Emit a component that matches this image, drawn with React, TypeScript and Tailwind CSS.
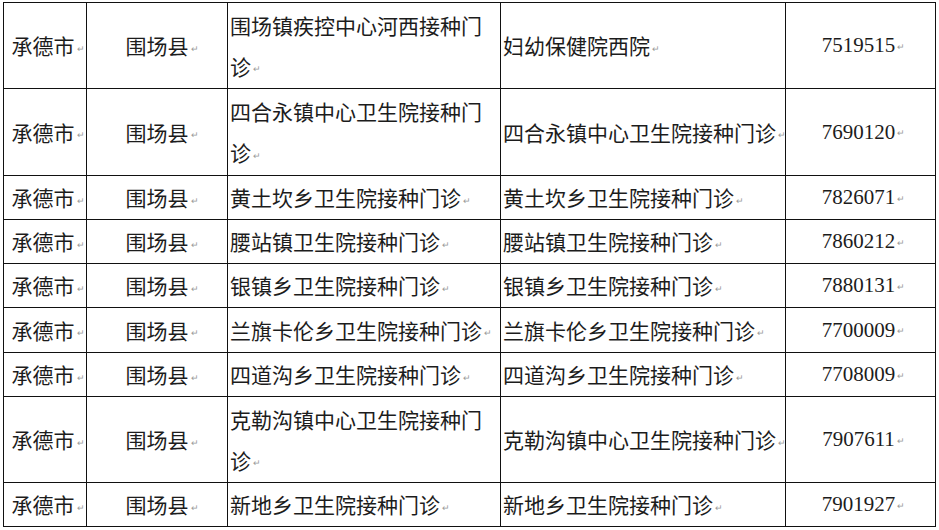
const rows: { h: string; clinic: string; unit: string; phone: string }[] = [
  { h: 'h-[85px]', clinic: '围场镇疾控中心河西接种门诊', unit: '妇幼保健院西院', phone: '7519515' },
  { h: 'h-[86px]', clinic: '四合永镇中心卫生院接种门诊', unit: '四合永镇中心卫生院接种门诊', phone: '7690120' },
  { h: 'h-[43px]', clinic: '黄土坎乡卫生院接种门诊', unit: '黄土坎乡卫生院接种门诊', phone: '7826071' },
  { h: 'h-[43px]', clinic: '腰站镇卫生院接种门诊', unit: '腰站镇卫生院接种门诊', phone: '7860212' },
  { h: 'h-[43px]', clinic: '银镇乡卫生院接种门诊', unit: '银镇乡卫生院接种门诊', phone: '7880131' },
  { h: 'h-[44px]', clinic: '兰旗卡伦乡卫生院接种门诊', unit: '兰旗卡伦乡卫生院接种门诊', phone: '7700009' },
  { h: 'h-[43px]', clinic: '四道沟乡卫生院接种门诊', unit: '四道沟乡卫生院接种门诊', phone: '7708009' },
  { h: 'h-[85px]', clinic: '克勒沟镇中心卫生院接种门诊', unit: '克勒沟镇中心卫生院接种门诊', phone: '7907611' },
  { h: 'h-[43px]', clinic: '新地乡卫生院接种门诊', unit: '新地乡卫生院接种门诊', phone: '7901927' },
]

// Word paragraph mark
const Mark = () => <span className="inline-block ml-[2px] text-[9px] leading-none text-[#9a9a9a] align-middle">↵</span>

const cjk = "font-['Noto_Sans_CJK_SC',sans-serif] text-[21px] leading-[41px]"

export default function App() {
  return (
    <div className="w-[939px] h-[530px] bg-white overflow-hidden pt-[2px] pl-[3px] text-[#1c1c1c]">
      <div className="w-fit bg-[#111] p-px">
        <div className="grid grid-cols-[82px_140px_272px_284px_149px] gap-px">
          {rows.map((r, i) => (
            <div key={i} className="contents">
              <div className={`${r.h} bg-white flex items-center justify-center pl-[6px] ${cjk}`}>
                <span>承德市<Mark /></span>
              </div>
              <div className={`${r.h} bg-white flex items-center justify-center pl-[10px] ${cjk}`}>
                <span>围场县<Mark /></span>
              </div>
              <div className={`${r.h} bg-white flex flex-col justify-center pl-[2px] whitespace-nowrap ${cjk}`}>
                {r.clinic.length > 12 ? (
                  <>
                    <div>{r.clinic.slice(0, 12)}</div>
                    <div>{r.clinic.slice(12)}<Mark /></div>
                  </>
                ) : (
                  <div>{r.clinic}<Mark /></div>
                )}
              </div>
              <div className={`${r.h} bg-white flex items-center pl-[2px] whitespace-nowrap ${cjk}`}>
                <span>{r.unit}<Mark /></span>
              </div>
              <div className={`${r.h} bg-white flex items-center justify-center pl-[6px] font-['Liberation_Serif','Noto_Sans_CJK_SC',serif] text-[21px] leading-[41px]`}>
                <span>{r.phone}<Mark /></span>
              </div>
            </div>
          ))}
        </div>
      </div>
    </div>
  )
}
